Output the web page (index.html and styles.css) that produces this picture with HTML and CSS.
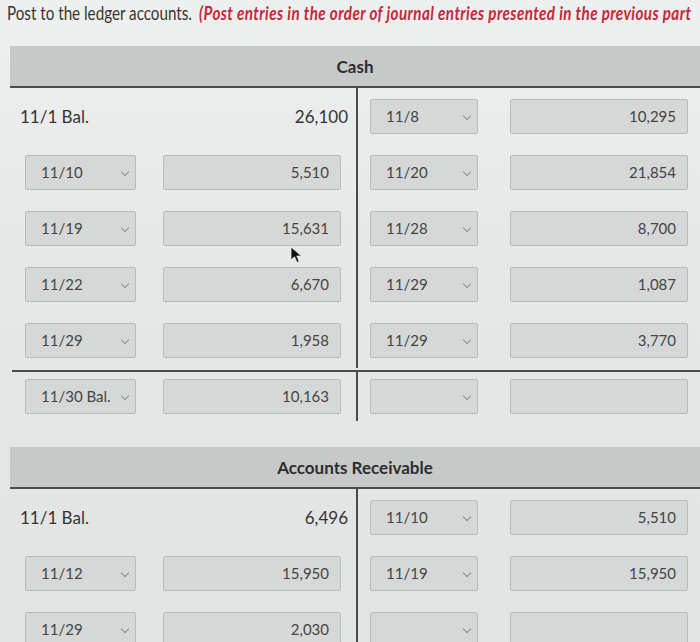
FILE: index.html
```html
<!DOCTYPE html>
<html>
<head>
<meta charset="utf-8">
<link rel="stylesheet" href="styles.css">
</head>
<body>
<div class="page">
  <p class="title"><span class="lead">Post to the ledger accounts.</span> <span class="note">(Post entries in the order of journal entries presented in the previous part</span></p>

  <section class="account">
    <div class="acct-head">Cash</div>
    <div class="row">
      <div class="side left"><span class="bal-label">11/1 Bal.</span><span class="bal-value">26,100</span></div>
      <div class="side right"><div class="sel">11/8<span class="chev"></span></div><div class="inp">10,295</div></div>
    </div>
    <div class="row">
      <div class="side left"><div class="sel">11/10<span class="chev"></span></div><div class="inp">5,510</div></div>
      <div class="side right"><div class="sel">11/20<span class="chev"></span></div><div class="inp">21,854</div></div>
    </div>
    <div class="row">
      <div class="side left"><div class="sel">11/19<span class="chev"></span></div><div class="inp has-cursor">15,631
        <svg class="cursor" width="14" height="18" viewBox="0 0 14 18"><path d="M1 1 L1 14 L4.5 10.8 L7 16.5 L9.2 15.5 L6.8 10 L11.5 10 Z" fill="#111" stroke="#eee" stroke-width="0.8"/></svg></div></div>
      <div class="side right"><div class="sel">11/28<span class="chev"></span></div><div class="inp">8,700</div></div>
    </div>
    <div class="row">
      <div class="side left"><div class="sel">11/22<span class="chev"></span></div><div class="inp">6,670</div></div>
      <div class="side right"><div class="sel">11/29<span class="chev"></span></div><div class="inp">1,087</div></div>
    </div>
    <div class="row">
      <div class="side left"><div class="sel">11/29<span class="chev"></span></div><div class="inp">1,958</div></div>
      <div class="side right"><div class="sel">11/29<span class="chev"></span></div><div class="inp">3,770</div></div>
    </div>
    <div class="row total">
      <div class="side left"><div class="sel">11/30 Bal.<span class="chev"></span></div><div class="inp">10,163</div></div>
      <div class="side right"><div class="sel"><span class="chev"></span></div><div class="inp"></div></div>
    </div>
  </section>

  <section class="account ar">
    <div class="acct-head">Accounts Receivable</div>
    <div class="row">
      <div class="side left"><span class="bal-label">11/1 Bal.</span><span class="bal-value">6,496</span></div>
      <div class="side right"><div class="sel">11/10<span class="chev"></span></div><div class="inp">5,510</div></div>
    </div>
    <div class="row">
      <div class="side left"><div class="sel">11/12<span class="chev"></span></div><div class="inp">15,950</div></div>
      <div class="side right"><div class="sel">11/19<span class="chev"></span></div><div class="inp">15,950</div></div>
    </div>
    <div class="row">
      <div class="side left"><div class="sel">11/29<span class="chev"></span></div><div class="inp">2,030</div></div>
      <div class="side right"><div class="sel"><span class="chev"></span></div><div class="inp"></div></div>
    </div>
  </section>
</div>
</body>
</html>
```
FILE: styles.css
```css
html, body {
  margin: 0;
  padding: 0;
}
body {
  width: 700px;
  height: 642px;
  overflow: hidden;
  background: linear-gradient(180deg, #eef0f0 0%, #e6e8e8 40%, #e2e4e4 100%);
  font-family: Lato, "Noto Sans", sans-serif;
  color: #3a3c3c;
}
.page {
  padding-left: 10px;
}
.title {
  margin: 0;
  margin-left: -3px;
  padding-top: 2px;
  height: 44px;
  font-size: 19px;
  line-height: 22px;
  white-space: nowrap;
  transform: scaleX(0.8);
  transform-origin: left top;
  width: 900px;
}
.title .lead {
  color: #343636;
}
.title .note {
  margin-left: 4px;
  color: #c8273a;
  font-weight: bold;
  font-style: italic;
  letter-spacing: 0.5px;
}
.account {
  width: 690px;
}
.acct-head {
  height: 40px;
  background: #c7c9c9;
  border-bottom: 2px solid #4a4c4c;
  text-align: center;
  font-weight: bold;
  font-size: 17px;
  line-height: 42px;
  color: #2c2e2e;
}
.row {
  display: flex;
  height: 56px;
}
.side {
  display: flex;
  align-items: center;
  box-sizing: border-box;
}
.side.left {
  width: 348px;
  border-right: 2px solid #4a4c4c;
  padding-left: 15px;
  padding-right: 15px;
  justify-content: space-between;
}
.side.right {
  flex: 1;
  padding-left: 12px;
  padding-right: 2px;
  justify-content: space-between;
}
.side.right .inp {
  margin-right: 10px;
}
.bal-label {
  font-size: 17px;
  margin-left: -5px;
  color: #333535;
}
.bal-value {
  font-size: 17px;
  margin-right: -7px;
  color: #333535;
}
.sel {
  position: relative;
  box-sizing: border-box;
  width: 111px;
  height: 35px;
  background: #d6d8d8;
  border: 1px solid #b9bbbb;
  border-radius: 2px;
  padding-left: 15px;
  font-size: 15px;
  line-height: 33px;
  color: #434545;
  white-space: nowrap;
}
.right .sel {
  width: 108px;
}
.chev {
  position: absolute;
  right: 7px;
  top: 13px;
  width: 5px;
  height: 5px;
  border-right: 1.3px solid #8a8c8c;
  border-bottom: 1.3px solid #8a8c8c;
  transform: rotate(45deg);
}
.inp {
  position: relative;
  box-sizing: border-box;
  width: 178px;
  height: 35px;
  background: #d6d8d8;
  border: 1px solid #b9bbbb;
  border-radius: 2px;
  padding-right: 11px;
  text-align: right;
  font-size: 15px;
  line-height: 33px;
  color: #434545;
}
.cursor {
  position: absolute;
  left: 126px;
  top: 34px;
}
.row.total {
  margin-top: 2px;
  border-top: 2px solid #4a4c4c;
  height: 49px;
  margin-left: 2px;
}
.row.total .side.left {
  width: 346px;
  padding-left: 13px;
}
.ar {
  margin-top: 26px;
}
```
